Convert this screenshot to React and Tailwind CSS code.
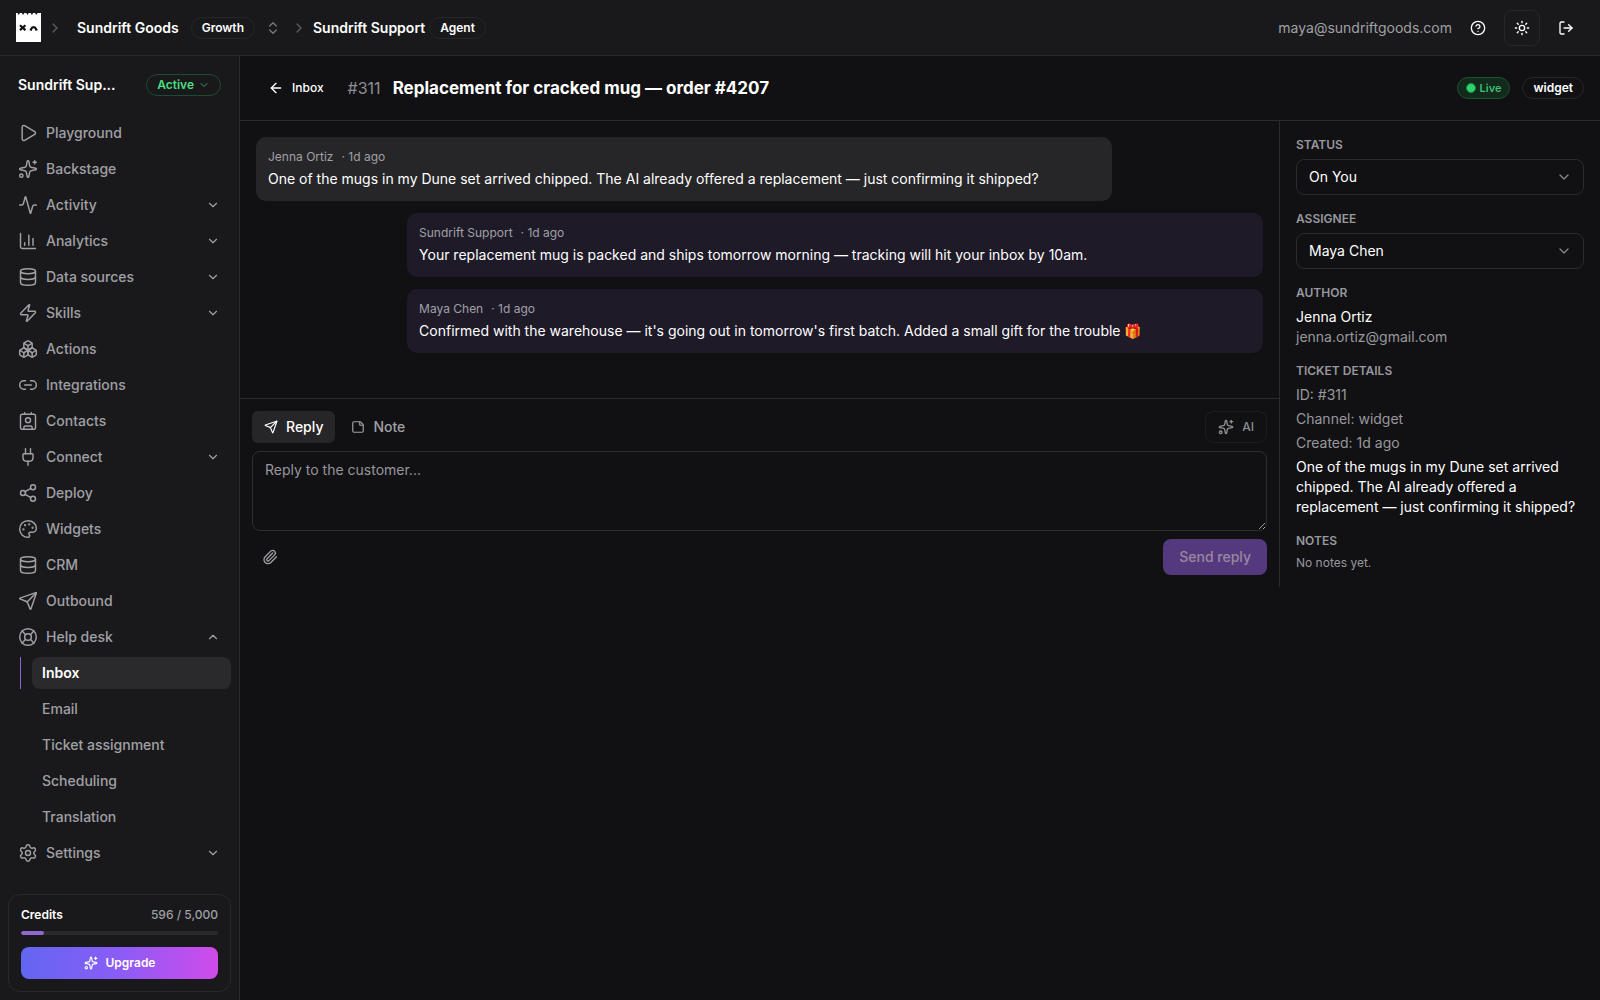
import {
    Activity, ArrowLeft, Boxes, ChartColumn, ChevronDown, ChevronRight, ChevronUp, ChevronsUpDown,
    CircleQuestionMark, Contact, Database, LifeBuoy, Link2, LogOut, Palette, Paperclip,
    Play, Plug, Send, Settings, Share2, Sparkles, StickyNote, Sun, Zap,
} from "lucide-react";

const NAV = [
    {label: "Playground", icon: Play},
    {label: "Backstage", icon: Sparkles},
    {label: "Activity", icon: Activity, expandable: true},
    {label: "Analytics", icon: ChartColumn, expandable: true},
    {label: "Data sources", icon: Database, expandable: true},
    {label: "Skills", icon: Zap, expandable: true},
    {label: "Actions", icon: Boxes},
    {label: "Integrations", icon: Link2},
    {label: "Contacts", icon: Contact},
    {label: "Connect", icon: Plug, expandable: true},
    {label: "Deploy", icon: Share2},
    {label: "Widgets", icon: Palette},
    {label: "CRM", icon: Database},
    {label: "Outbound", icon: Send},
    {
        label: "Help desk",
        icon: LifeBuoy,
        expandable: true,
        items: ["Inbox", "Email", "Ticket assignment", "Scheduling", "Translation"],
    },
    {label: "Settings", icon: Settings, expandable: true},
];

const MESSAGES = [
    {
        author: "Jenna Ortiz",
        time: "1d ago",
        text: "One of the mugs in my Dune set arrived chipped. The AI already offered a replacement — just confirming it shipped?",
    },
    {
        author: "Sundrift Support",
        time: "1d ago",
        text: "Your replacement mug is packed and ships tomorrow morning — tracking will hit your inbox by 10am.",
        own: true,
    },
    {
        author: "Maya Chen",
        time: "1d ago",
        text: "Confirmed with the warehouse — it's going out in tomorrow's first batch. Added a small gift for the trouble 🎁",
        own: true,
    },
];

const CREDITS = {used: 596, total: 5000};

const Logo = () => (
    <svg viewBox="0 0 25 29" className="h-[29px] w-[25px]" aria-hidden="true">
        <path
            fill="#fff"
            d="M0 0h1.5l1.2 2 1.2-2h2l1.2 2 1.2-2h2l1.2 2 1.2-2h2l1.2 2 1.2-2h2l1.2 2 1.2-2H25v29H0Z"
        />
        <path d="m4.8 13 3.8 3.4M8.6 13l-3.8 3.4" stroke="#111" strokeWidth="2.2" strokeLinecap="square"/>
        <path d="M15 16.4c1.2-3 4-3 5.2 0" fill="none" stroke="#111" strokeWidth="2.4" strokeLinecap="square"/>
    </svg>
);

const Badge = ({children}) => (
    <span className="rounded-full border border-[#262629] px-2.5 py-0.5 text-xs font-semibold text-white">
        {children}
    </span>
);

const TopBar = () => (
    <header className="flex h-14 items-center justify-between border-b border-[#2b2b2e] bg-[#19191b] px-4">
        <div className="flex items-center">
            <a href="#home" aria-label="Home"><Logo/></a>
            <ChevronRight size={16} className="ml-1.5 text-[#5c5c61]"/>
            <a href="#org" className="ml-3.5 text-sm font-semibold">Sundrift Goods</a>
            <span className="ml-3 flex"><Badge>Growth</Badge></span>
            <button aria-label="Switch organization" className="ml-2.5 text-[#77777c]">
                <ChevronsUpDown size={16}/>
            </button>
            <ChevronRight size={16} className="mr-1.5 ml-2.5 text-[#5c5c61]"/>
            <a href="#agent" className="mr-1 text-sm font-semibold">Sundrift Support</a>
            <Badge>Agent</Badge>
        </div>
        <div className="flex items-center gap-2">
            <span className="text-sm text-[#a0a0a6]">maya@sundriftgoods.com</span>
            <button aria-label="Help" className="flex size-9 items-center justify-center rounded-lg">
                <CircleQuestionMark size={16}/>
            </button>
            <button
                aria-label="Toggle theme"
                className="flex size-9 items-center justify-center rounded-lg border border-[#262629]"
            >
                <Sun size={16}/>
            </button>
            <button aria-label="Log out" className="flex size-9 items-center justify-center rounded-lg">
                <LogOut size={16}/>
            </button>
        </div>
    </header>
);

const NavItem = ({item}) => {
    const Icon = item.icon;
    const Chevron = item.items ? ChevronUp : ChevronDown;

    return (
        <li>
            <a href="#nav" className="flex h-8 items-center gap-2 rounded-lg px-2.5 text-[#a0a0a6]">
                <Icon size={20} strokeWidth={1.75}/>
                <span className="flex-1 text-sm font-medium">{item.label}</span>
                {item.expandable && <span className="px-px"><Chevron size={14}/></span>}
            </a>
            {item.items && (
                <ul className="mt-1 ml-3 flex flex-col gap-1">
                    {item.items.map((label, i) => (
                        <li
                            key={label}
                            className={i === 0 ? "border-l border-[#8e63ce] pl-[11px]" : "border-l border-transparent pl-[11px]"}
                        >
                            <a
                                href="#nav"
                                className={
                                    i === 0
                                        ? "flex h-8 items-center rounded-lg bg-[#2a2a2c] px-2.5 text-sm font-semibold text-white"
                                        : "flex h-8 items-center rounded-lg px-2.5 text-sm font-medium text-[#a0a0a6]"
                                }
                            >
                                {label}
                            </a>
                        </li>
                    ))}
                </ul>
            )}
        </li>
    );
};

const Sidebar = () => (
    <aside className="flex w-60 shrink-0 flex-col border-r border-[#2b2b2e] bg-[#19191b] p-2">
        <div className="flex items-center justify-between px-2.5 py-2.5">
            <span title="Sundrift Support" className="text-sm font-semibold">Sundrift Sup...</span>
            <button className="flex items-center gap-1 rounded-full border border-[#1d4a32] px-2.5 py-0.5 text-xs font-semibold text-[#4ade80]">
                Active
                <ChevronDown size={12} className="text-[#3c9a60]"/>
            </button>
        </div>
        <nav className="mt-[11px] flex-1">
            <ul className="flex flex-col gap-1">
                {NAV.map((item) => <NavItem key={item.label} item={item}/>)}
            </ul>
        </nav>
        <div className="rounded-xl border border-[#29292c] p-3">
            <div className="flex justify-between text-xs font-medium">
                <span className="font-semibold">Credits</span>
                <span className="text-[#a0a0a6]">
                    {CREDITS.used} / {CREDITS.total.toLocaleString("en-US")}
                </span>
            </div>
            <div className="mt-2 h-1 overflow-hidden rounded-full bg-[#2a2a2c]">
                <div
                    className="h-full rounded-full bg-[#9167d2]"
                    style={{width: `${(CREDITS.used / CREDITS.total) * 100}%`}}
                />
            </div>
            <button className="mt-3 flex h-8 w-full items-center justify-center gap-2 rounded-lg bg-linear-to-r/srgb from-[#6366f1] via-[#8b5cf6] to-[#d04bea] text-xs font-semibold text-white">
                <Sparkles size={14}/>
                Upgrade
            </button>
        </div>
    </aside>
);

const TicketHeader = () => (
    <div className="flex items-center justify-between border-b border-[#2b2b2e] px-4 py-3.5">
        <div className="flex items-center gap-3">
            <a href="#inbox" className="flex h-9 items-center gap-2 px-3 text-xs font-medium">
                <ArrowLeft size={16}/>
                Inbox
            </a>
            <span className="text-base text-[#8e8e94]">#311</span>
            <h1 className="text-[17px] leading-7 font-bold">Replacement for cracked mug — order #4207</h1>
        </div>
        <div className="flex items-center gap-3">
            <span className="flex items-center gap-1 rounded-full border border-[#1c5333] bg-[#12291c] px-2 py-0.5 text-[11px] leading-4 font-semibold text-[#3fbf70]">
                <span className="size-2.5 rounded-full border border-[#1a8a45] bg-[#2bd46b]"/>
                Live
            </span>
            <Badge>widget</Badge>
        </div>
    </div>
);

const Message = ({message}) => (
    <div
        className={
            message.own
                ? "w-[85%] self-end rounded-[10px] bg-[#1e1a28] p-3"
                : "w-[85%] rounded-[10px] bg-[#262628] p-3"
        }
    >
        <div className="mb-1 flex gap-2 text-xs text-[#a0a0a6]">
            <span>{message.author}</span>
            <span>· {message.time}</span>
        </div>
        <p className="text-sm">{message.text}</p>
    </div>
);

const Composer = () => (
    <div className="flex flex-col gap-2 border-t border-[#2b2b2e] p-3">
        <div className="flex items-center justify-between">
            <div className="flex gap-1">
                <button className="flex h-8 items-center gap-2 rounded-md bg-[#262628] px-3 text-sm font-medium">
                    <Send size={14}/>
                    Reply
                </button>
                <button className="flex h-8 items-center gap-2 rounded-md px-3 text-sm font-medium text-[#a0a0a6]">
                    <StickyNote size={14}/>
                    Note
                </button>
            </div>
            <button className="flex h-8 items-center gap-2 rounded-lg border border-[#1d1d20] px-3 text-xs font-medium text-[#8e8e94]">
                <Sparkles size={16}/>
                AI
            </button>
        </div>
        <textarea
            aria-label="Reply"
            placeholder="Reply to the customer..."
            className="block h-20 w-full resize-y rounded-lg border border-[#2e2e32] bg-transparent px-3 py-2 text-sm outline-none placeholder:text-[#96969c]"
        />
        <div className="flex items-center justify-between">
            <button aria-label="Attach file" className="flex size-9 items-center justify-center text-[#a0a0a6]">
                <Paperclip size={16}/>
            </button>
            <button className="h-9 rounded-lg bg-[#55397e] px-4 text-sm font-medium text-[#99879f]">
                Send reply
            </button>
        </div>
    </div>
);

const SelectField = ({id, label, options}) => (
    <div className="flex flex-col gap-1.5">
        <label htmlFor={id} className="text-xs font-semibold text-[#98989e] uppercase">{label}</label>
        <div className="relative">
            <select
                id={id}
                className="h-9 w-full appearance-none rounded-lg border border-[#2b2b2e] bg-[#111113] px-3 text-sm outline-none"
            >
                {options.map((option) => <option key={option}>{option}</option>)}
            </select>
            <ChevronDown size={16} className="pointer-events-none absolute top-2.5 right-3 text-[#85858a]"/>
        </div>
    </div>
);

const SectionTitle = ({children}) => (
    <h2 className="text-xs font-semibold text-[#98989e] uppercase">{children}</h2>
);

const TicketPanel = () => (
    <aside className="flex w-80 shrink-0 flex-col gap-4 p-4 text-sm">
        <SelectField id="status" label="Status" options={["On You"]}/>
        <SelectField id="assignee" label="Assignee" options={["Maya Chen"]}/>
        <section>
            <SectionTitle>Author</SectionTitle>
            <p className="mt-1.5">Jenna Ortiz</p>
            <p className="text-[#98989e]">jenna.ortiz@gmail.com</p>
        </section>
        <section>
            <SectionTitle>Ticket details</SectionTitle>
            <div className="mt-1.5 flex flex-col gap-1 text-[#98989e]">
                <p>ID: #311</p>
                <p>Channel: widget</p>
                <p>Created: 1d ago</p>
                <p className="text-white">{MESSAGES[0].text}</p>
            </div>
        </section>
        <section>
            <SectionTitle>Notes</SectionTitle>
            <p className="mt-1.5 text-xs text-[#98989e]">No notes yet.</p>
        </section>
    </aside>
);

export default function App() {
    return (
        <div className="flex min-h-screen flex-col bg-[#111113] font-['Inter',sans-serif] text-white">
            <TopBar/>
            <div className="flex flex-1">
                <Sidebar/>
                <main className="min-w-0 flex-1">
                    <TicketHeader/>
                    <div className="flex">
                        <div className="flex min-w-0 flex-1 flex-col border-r border-[#2b2b2e]">
                            <div className="flex flex-1 flex-col gap-3 p-4">
                                {MESSAGES.map((message) => <Message key={message.text} message={message}/>)}
                            </div>
                            <Composer/>
                        </div>
                        <TicketPanel/>
                    </div>
                </main>
            </div>
        </div>
    );
}
